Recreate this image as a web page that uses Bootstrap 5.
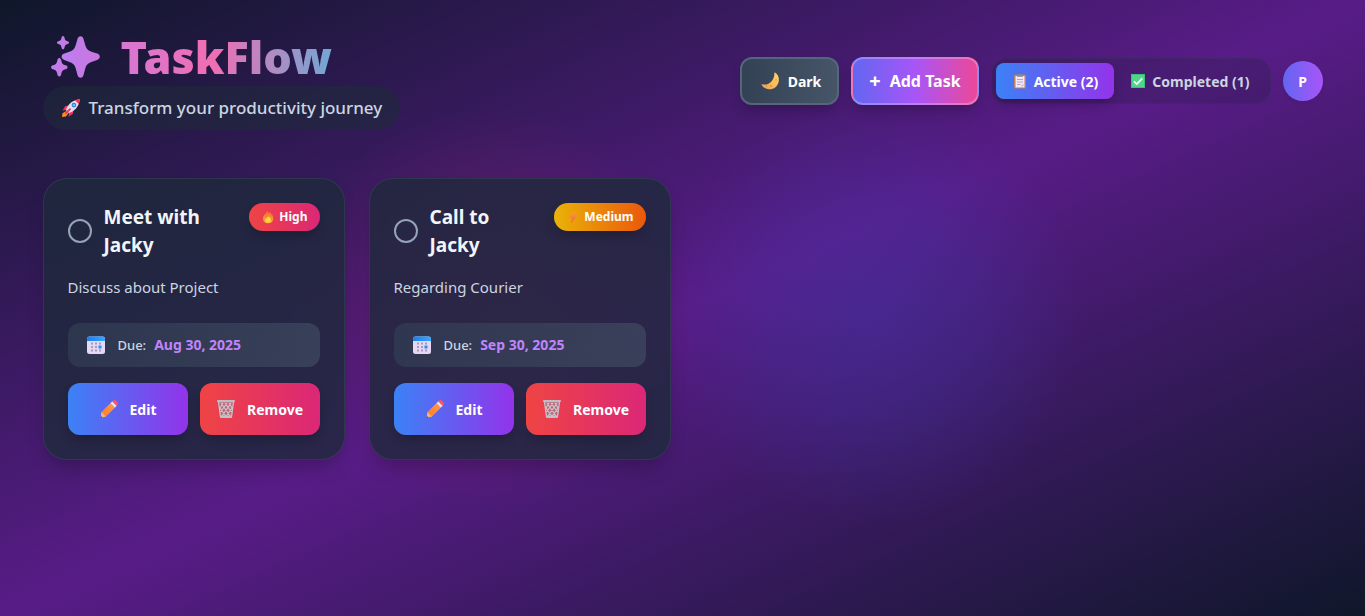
<!DOCTYPE html>
<html lang="en">
<head>
<meta charset="utf-8">
<meta name="viewport" content="width=device-width, initial-scale=1">
<title>TaskFlow</title>
<link href="https://cdn.jsdelivr.net/npm/bootstrap@5.3.0/dist/css/bootstrap.min.css" rel="stylesheet">
<style>
  body {
    font-family: "Noto Sans", "Open Sans", sans-serif;
    font-size: 15px;
    line-height: 24px;
    color: #cbd5e1;
    min-height: 100vh;
    background:
      radial-gradient(circle 210px at 64% 51%, rgba(59, 66, 190, .32), rgba(59, 66, 190, .2) 50%, transparent),
      radial-gradient(circle 200px at 36% 50%, rgba(160, 35, 110, .32), rgba(150, 35, 110, .2) 50%, transparent),
      linear-gradient(to bottom right, #0f172a, #581c87, #0f172a) no-repeat;
  }
  .page { max-width: 1280px; padding-top: 32px; padding-bottom: 32px; }
  .brand {
    font-size: 45px;
    line-height: 50px;
    font-weight: 900;
    padding-left: 8px;
    gap: 20px;
  }
  .brand-grad {
    background: linear-gradient(to right, #c27ff0 -38%, #f06eb2 43%, #5fb0d8 108%);
    -webkit-background-clip: text;
    background-clip: text;
    color: transparent;
  }
  .tagline {
    font-size: 17px;
    line-height: 28px;
    font-weight: 500;
    padding: 8px 18px;
    gap: 8px;
    background: rgba(30, 41, 59, .6);
  }
  .btn { --bs-btn-color: #fff; --bs-btn-hover-color: #fff; --bs-btn-active-color: #fff; font-size: 14px; font-weight: 700; border: 0; }
  .controls { gap: 12px; }
  .ctl { height: 48px; border-radius: 12px; box-shadow: 0 8px 14px -4px rgba(0, 0, 0, .25); }
  .btn-theme { padding: 0 16px 0 18px; gap: 8px; border: 2px solid #55657a; background: linear-gradient(to right, #334155, #475569); }
  .btn-add, .btn-add:hover { font-size: 16px; padding: 0 16px; gap: 9px; border: 2px solid rgba(255, 255, 255, .25);
    background: linear-gradient(to right, #6366f1, #a855f7, #ec4899); }
  .plus { font-size: 20px; }
  .tabs { padding: 4px; border: 1px solid rgba(51, 65, 85, .3); border-radius: 16px; background: rgba(30, 27, 59, .25); }
  .tabs .btn { height: 36px; padding: 0 16px; gap: 6px; border-radius: 8px; }
  .tabs .btn-idle { color: #cbd5e1; }
  .grad-blue { background: linear-gradient(to right, #3b82f6, #9333ea); box-shadow: 0 6px 12px -3px rgba(0, 0, 0, .28); }
  .grad-red { background: linear-gradient(to right, #ef4444, #db2777); box-shadow: 0 6px 12px -3px rgba(0, 0, 0, .28); }
  .grad-amber { background: linear-gradient(to right, #eab308, #ea580c); box-shadow: 0 6px 12px -3px rgba(0, 0, 0, .28); }
  .avatar { width: 40px; height: 40px; padding: 0; background: linear-gradient(to right, #6366f1, #a855f7); }
  .task { padding: 24px; border: 1px solid rgba(51, 75, 85, .5); border-radius: 24px; color: inherit;
    background: rgba(30, 41, 59, .8); box-shadow: 0 12px 20px -6px rgba(0, 0, 0, .25); }
  .task-title { font-size: 19px; line-height: 28px; font-weight: 700; color: #f1f5f9; }
  .tick { appearance: none; width: 24px; height: 24px; margin: 0; border: 2px solid #94a3b8; border-radius: 50%; background: transparent; flex: none; }
  .tick:checked { background: #a855f7; }
  .prio { height: 28px; padding: 0 12px; gap: 4px; font-size: 12px; font-weight: 700; color: #fff; flex: none; }
  .due { height: 44px; padding: 0 18px; border-radius: 12px; font-size: 13px; font-weight: 500; background: linear-gradient(to right, rgba(51, 65, 85, .6), rgba(71, 85, 105, .55)); }
  .due time { color: #c084fc; font-size: 14px; font-weight: 700; }
  .acts { gap: 12px; }
  .acts .btn { height: 52px; flex: 1 1 0; border-radius: 12px; padding: 0; gap: 11px; }
  svg { flex: none; display: block; }
  .i20 { width: 20px; height: 20px; }
  .i16 { width: 16px; height: 16px; }
  .i14 { width: 14px; height: 14px; }
</style>
</head>
<body>
<svg width="0" height="0" class="position-absolute" aria-hidden="true">
  <defs>
    <linearGradient id="gMoon" x1="1" y1="0" x2="0" y2="1"><stop offset="0" stop-color="#ffd76a"/><stop offset="1" stop-color="#f0a050"/></linearGradient>
    <linearGradient id="gCal" x1="0" x2="1"><stop offset="0" stop-color="#1b7ff0"/><stop offset="1" stop-color="#35a8ff"/></linearGradient>
    <linearGradient id="gPen" x1="1" y1="0" x2="0" y2="1"><stop offset="0" stop-color="#ff9a4a"/><stop offset="1" stop-color="#ff7a1f"/></linearGradient>
    <linearGradient id="gFire" x1="0" y1="0" x2="0" y2="1"><stop offset="0" stop-color="#f26a35"/><stop offset="1" stop-color="#ffab2e"/></linearGradient>
    <linearGradient id="gBolt" x1="0" y1="0" x2="0" y2="1"><stop offset="0" stop-color="#ffa040"/><stop offset="1" stop-color="#f2603c"/></linearGradient>
    <symbol id="moon" viewBox="0 0 20 20"><path d="M14.5 1.200c3.300 1.800 5 5 4.200 9.200-1 5.200-5.300 8.200-10 7.800C5.200 17.900 2.400 16 1.200 13c2 .8 5 .9 7.800-.6 3.800-2 5.600-5.800 5.500-11.200z" fill="url(#gMoon)"/><circle cx="11" cy="15" r="1" fill="#e08f3f"/><circle cx="16" cy="9" r="1" fill="#eea748"/><circle cx="6.500" cy="15" r=".7" fill="#e08f3f"/></symbol>
    <symbol id="clip" viewBox="0 0 16 16"><rect x="2" y="1.500" width="12" height="14" rx="1.200" fill="#bd7f5d"/><rect x="3.500" y="3" width="9" height="11.500" fill="#f1e8f8"/><path d="M5 3.800V2.500L6.500 1h3L11 2.500v1.300z" fill="#8d8396"/><path d="M5 6.500h6M5 9h6M5 11.500h3.500" stroke="#b4a5c4" stroke-width="1"/><path d="M9.500 14.500v-3h3z" fill="#cbbbd9"/></symbol>
    <symbol id="check" viewBox="0 0 16 16"><rect x="1" y="1" width="14" height="14" rx=".6" fill="#4fd68b"/><rect x="1.400" y="1.400" width="13.200" height="13.200" fill="none" stroke="#37bd74" stroke-width=".8"/><path d="M4 8.300l2.800 2.800L12.300 5.300" fill="none" stroke="#fff" stroke-width="1.700"/></symbol>
    <symbol id="rocket" viewBox="0 0 20 20"><path d="M6 12.500L1.500 15.200 1 19l4-.6 2.700-3.400z" fill="#ff8a1f"/><path d="M8.500 7.500L4.300 8 1.500 12.500l4.500-.8zM12.500 11.500l-.6 4.200-4.400 3 .8-4.700z" fill="#f5325f"/><path d="M5 12.200C6.500 6.500 11.500 2 18.700 1.300 18.300 8.500 13.500 13.500 7.800 15z" fill="#e4dcec"/><path d="M14 2.300c1.500-.6 3-.9 4.700-1-.1 1.700-.4 3.200-1 4.700z" fill="#f5325f"/><circle cx="12.900" cy="7.100" r="2.300" fill="#2c83df"/><circle cx="12.900" cy="7.100" r="1.200" fill="#75c7ff"/><path d="M4.500 15.600l5-5" stroke="#f5325f" stroke-width="2"/></symbol>
    <symbol id="fire" viewBox="0 0 14 14"><path d="M6.200 1c1 .8 1.500 1.700 1.500 2.600L8.600 2c1.500 1 1.600 2.300 1.600 2.800l.8-.8c1 2 1.200 3.700 1.200 4.700 0 3-2.400 4.600-5.200 4.600S2 11.500 2 8.700c0-2 .8-3.700 2.200-5.200l.3 1.300C4.600 3.300 5.200 2 6.200 1z" fill="url(#gFire)"/><path d="M7.600 6.500c2 1.500 2.300 2.400 2.300 3.500 0 1.700-1.300 2.600-2.900 2.600S4.200 11.700 4.200 10c0-.8.3-1.400.7-2l.8 1c.1-1 .9-1.800 1.900-2.500z" fill="#ffd83f"/></symbol>
    <symbol id="bolt" viewBox="0 0 14 14"><path d="M9 .8L3.300 8h2.800L5 13.500l6-7.700H8z" fill="url(#gBolt)"/></symbol>
    <symbol id="cal" viewBox="0 0 20 20"><rect x="1" y="1.500" width="18" height="17.500" rx="2.500" fill="#e6d8f2"/><path d="M1 6V4a2.500 2.500 0 0 1 2.500-2.500h13A2.500 2.500 0 0 1 19 4v2z" fill="url(#gCal)"/><g fill="#a99bbb"><path d="M5 7.500h2v2H5zM9 7.500h2v2H9zM13 7.500h2v2h-2zM5 11h2v2H5zM9 11h2v2H9zM5 14.500h2v2H5zM9 14.500h2v2H9zM13 14.500h2v2h-2z"/></g><path d="M12.500 10.500h3v3h-3z" fill="#2893f5"/></symbol>
    <symbol id="pencil" viewBox="0 0 20 20"><path d="M2.500 13L11.300 4.200l4.500 4.500L7 17.500l-5.300 1.300z" fill="url(#gPen)"/><path d="M2.500 13L7 17.500l-5.300 1.300z" fill="#e8b58f"/><path d="M2 17l1.500 1.400-2 .5z" fill="#4f465c"/><path d="M11.300 4.200l2-2 4.500 4.500-2 2z" fill="#e5dcec"/><path d="M13.300 2.200l.7-.6c1-.9 2.200-.8 3 0l1.400 1.400c.8.8.9 2 0 3l-.6.700z" fill="#fb5266"/></symbol>
    <symbol id="trash" viewBox="0 0 20 20"><path d="M2 2.500h16L15.800 18.500H4.200z" fill="#94919c" fill-opacity=".5"/><path d="M2.500 3L4.500 18M17.500 3l-2 15M5 4l9 13M9 4l6.500 9M13 4l3 5M4 9l6 8.500M15 4L6 17M11 4l-6.500 9M7 4L4 9M16 9l-6 8.500" stroke="#c9c6cf" stroke-width="1.200" fill="none"/><rect x="1" y="1" width="18" height="2.200" rx="1" fill="#bfbcc6"/><rect x="4" y="16.500" width="12" height="2.500" rx="1" fill="#c3c0c9"/></symbol>
  </defs>
</svg>

<div class="container-fluid page px-3 px-xl-0">
  <header class="d-flex flex-wrap justify-content-between align-items-center gap-3 mb-5">
    <div>
      <h1 class="brand d-flex align-items-center mb-1">
        <svg width="50" height="46" viewBox="0 0 50 46" aria-hidden="true"><defs><linearGradient id="gStar" x1="0" x2="1"><stop offset="0" stop-color="#be7df2"/><stop offset="1" stop-color="#c877dc"/></linearGradient></defs><g fill="url(#gStar)"><path d="M29.500 2.200c1.500 0 2.500 1 3 2.800l1.900 6.500c1 3.600 2.700 5.200 6.100 6.200l5.600 1.900c1.800.7 2.700 1.800 2.700 3.200s-.9 2.500-2.700 3.200l-5.600 1.900c-3.400 1-5.100 2.600-6.100 6.200L32.500 41c-.5 1.800-1.500 2.800-3 2.800s-2.500-1-3-2.800l-1.900-6.900c-1-3.600-2.700-5.200-6.100-6.200L13.300 26c-1.800-.7-2.700-1.800-2.700-3.200s.9-2.500 2.700-3.200l5.200-1.900c3.400-1 5.100-2.600 6.100-6.200L26.500 5c.5-1.800 1.500-2.800 3-2.800z"/><path d="M12 2c.9 0 1.300.8 1.500 1.800.5 2.300 1 2.900 3.200 3.400.9.200 1.300.7 1.300 1.400s-.4 1.200-1.300 1.400c-2.200.5-2.700 1.100-3.200 3.400-.2 1-.6 1.800-1.500 1.800s-1.300-.8-1.500-1.800c-.5-2.300-1-2.900-3.200-3.400C6.400 9.800 6 9.300 6 8.600s.4-1.200 1.300-1.400c2.200-.5 2.700-1.100 3.200-3.400C10.700 2.800 11.100 2 12 2z"/><path d="M8.300 24c1.100 0 1.700 1 2 2.400.6 3.100 1.400 4 4.300 4.800 1.300.4 1.900 1.100 1.900 2s-.6 1.600-1.900 2c-2.900.8-3.700 1.700-4.300 4.800-.3 1.400-.9 2.400-2 2.400s-1.700-1-2-2.400c-.6-3.100-1.400-4-4.300-4.800-1.300-.4-1.900-1.100-1.900-2s.6-1.600 1.900-2c2.900-.8 3.700-1.700 4.300-4.800.3-1.400.9-2.400 2-2.400z"/></g></svg>
        <span class="brand-grad">TaskFlow</span>
      </h1>
      <p class="tagline d-inline-flex align-items-center rounded-pill mb-0"><svg class="i20" aria-hidden="true"><use href="#rocket"/></svg>Transform your productivity journey</p>
    </div>
    <div class="controls d-flex flex-wrap align-items-center">
      <button type="button" class="btn ctl btn-theme d-flex align-items-center"><svg class="i20" aria-hidden="true"><use href="#moon"/></svg>Dark</button>
      <button type="button" class="btn ctl btn-add d-flex align-items-center"><span class="plus">+</span>Add Task</button>
      <div class="tabs d-flex" role="group" aria-label="Task filter">
        <button type="button" class="btn grad-blue d-flex align-items-center"><svg class="i16" aria-hidden="true"><use href="#clip"/></svg>Active (2)</button>
        <button type="button" class="btn btn-idle d-flex align-items-center"><svg class="i16" aria-hidden="true"><use href="#check"/></svg>Completed (1)</button>
      </div>
      <button type="button" class="btn avatar rounded-circle shadow-sm">P</button>
    </div>
  </header>

  <main class="row row-cols-1 row-cols-md-2 row-cols-lg-4 g-4">
    <div class="col">
      <article class="card task">
        <div class="d-flex justify-content-between align-items-start gap-3 mb-3">
          <div class="d-flex align-items-center gap-2">
            <input type="checkbox" class="tick me-1" id="t1">
            <label class="task-title" for="t1">Meet with Jacky</label>
          </div>
          <span class="prio grad-red rounded-pill d-flex align-items-center"><svg class="i14" aria-hidden="true"><use href="#fire"/></svg>High</span>
        </div>
        <p class="mb-4">Discuss about Project</p>
        <div class="due d-flex align-items-center gap-2 mb-3"><svg class="i20 me-1" aria-hidden="true"><use href="#cal"/></svg><span>Due:</span><time datetime="2025-08-30">Aug 30, 2025</time></div>
        <div class="d-flex acts">
          <button type="button" class="btn grad-blue d-flex align-items-center justify-content-center"><svg class="i20" aria-hidden="true"><use href="#pencil"/></svg>Edit</button>
          <button type="button" class="btn grad-red d-flex align-items-center justify-content-center"><svg class="i20" aria-hidden="true"><use href="#trash"/></svg>Remove</button>
        </div>
      </article>
    </div>
    <div class="col">
      <article class="card task">
        <div class="d-flex justify-content-between align-items-start gap-3 mb-3">
          <div class="d-flex align-items-center gap-2">
            <input type="checkbox" class="tick me-1" id="t2">
            <label class="task-title" for="t2">Call to Jacky</label>
          </div>
          <span class="prio grad-amber rounded-pill d-flex align-items-center"><svg class="i14" aria-hidden="true"><use href="#bolt"/></svg>Medium</span>
        </div>
        <p class="mb-4">Regarding Courier</p>
        <div class="due d-flex align-items-center gap-2 mb-3"><svg class="i20 me-1" aria-hidden="true"><use href="#cal"/></svg><span>Due:</span><time datetime="2025-09-30">Sep 30, 2025</time></div>
        <div class="d-flex acts">
          <button type="button" class="btn grad-blue d-flex align-items-center justify-content-center"><svg class="i20" aria-hidden="true"><use href="#pencil"/></svg>Edit</button>
          <button type="button" class="btn grad-red d-flex align-items-center justify-content-center"><svg class="i20" aria-hidden="true"><use href="#trash"/></svg>Remove</button>
        </div>
      </article>
    </div>
  </main>
</div>
<script src="https://cdn.jsdelivr.net/npm/bootstrap@5.3.0/dist/js/bootstrap.bundle.min.js"></script>
</body>
</html>
